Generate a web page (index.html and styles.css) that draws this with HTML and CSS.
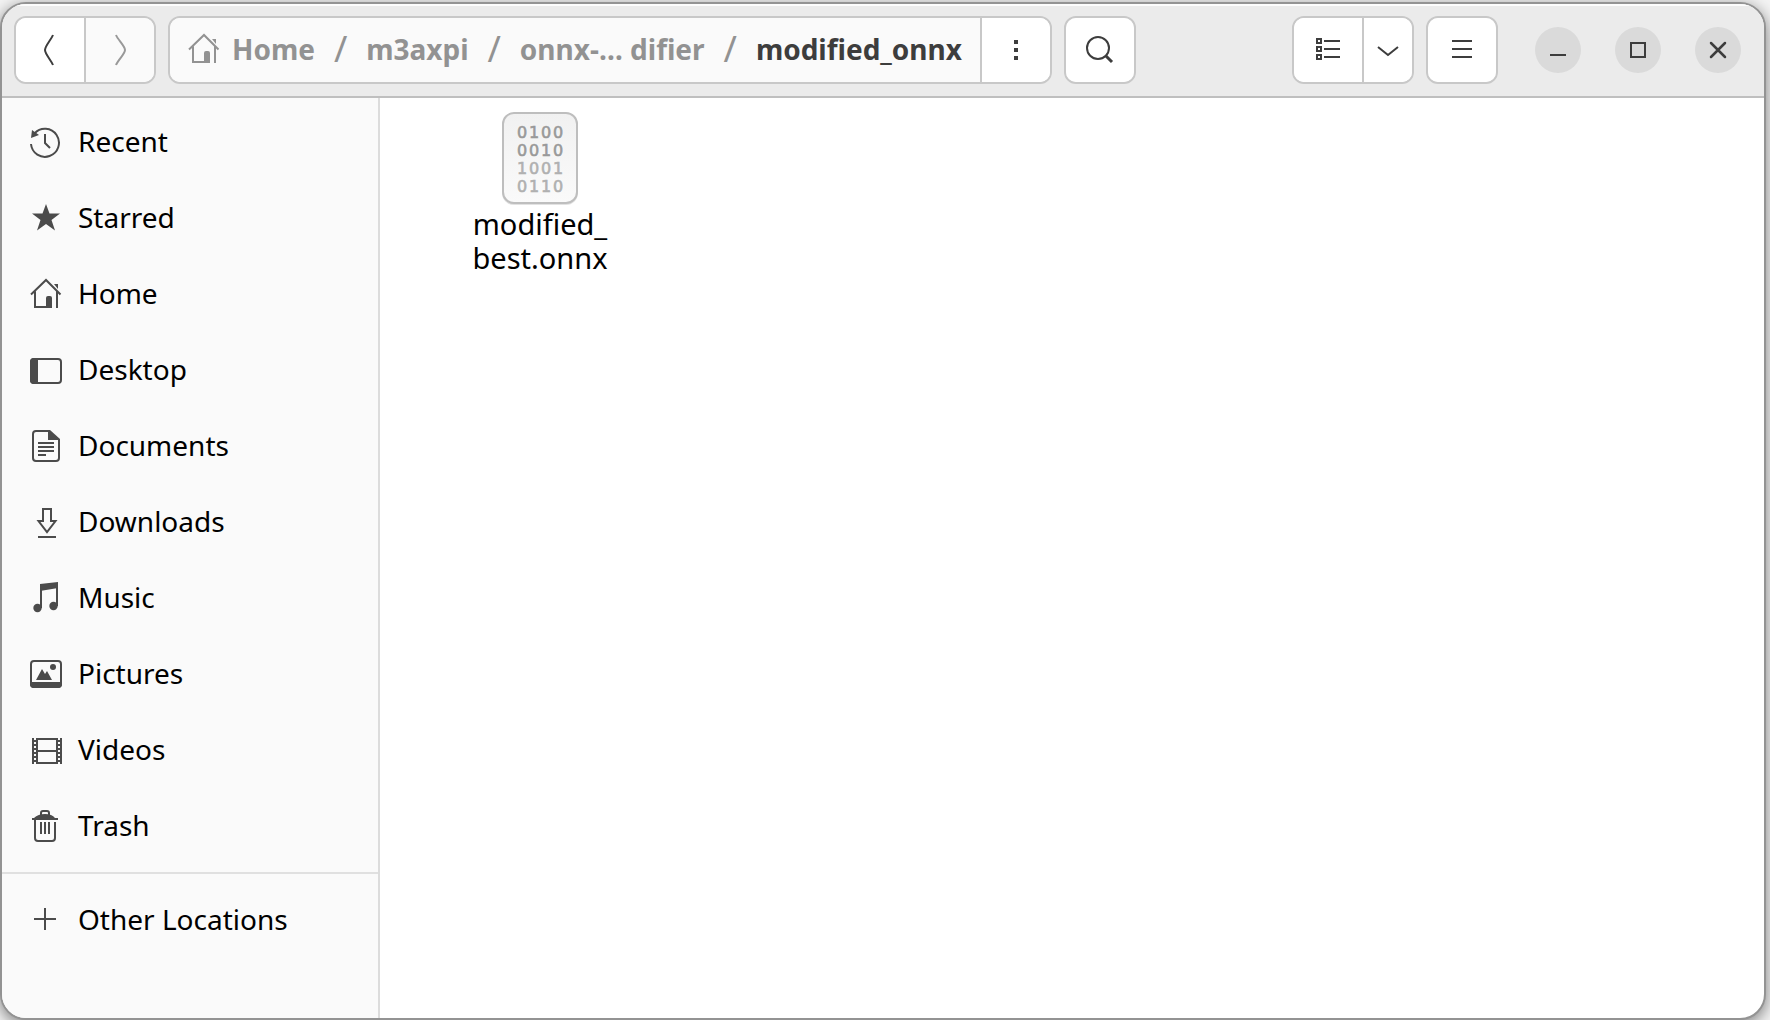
FILE: index.html
```html
<!DOCTYPE html>
<html lang="en">
<head>
<meta charset="utf-8">
<meta name="viewport" content="width=device-width, initial-scale=1">
<title>modified_onnx</title>
<link rel="stylesheet" href="styles.css">
</head>
<body>
<svg class="defs" aria-hidden="true">
  <symbol id="home" viewBox="0 0 32 32">
    <path d="M1 16.500 16 2 30.500 16.500M5 13.500V29H22M27 13.500V30" fill="none" stroke="currentColor" stroke-width="2"/>
    <path d="M16 30V20q0-2 2-2h2q2 0 2 2v10zM24 6h4v5z" fill="currentColor"/>
  </symbol>
</svg>
<div class="window">
  <header class="headerbar">
    <div class="group">
      <button class="btn" aria-label="Back"><svg class="icon" viewBox="0 0 32 32"><path d="M19 1C17 6 11 12 11 16S17 26 19 31" fill="none" stroke="currentColor" stroke-width="2"/></svg></button>
      <button class="btn btn-muted" aria-label="Forward" disabled><svg class="icon" viewBox="0 0 32 32"><path d="M12 1C14 6 21 12 21 16S14 26 12 31" fill="none" stroke="currentColor" stroke-width="2"/></svg></button>
    </div>
    <div class="group pathbar">
      <nav class="crumbs" aria-label="Path">
        <a class="crumb" href="#"><svg class="icon"><use href="#home"/></svg>Home</a>
        <span class="slash">/</span>
        <a class="crumb" href="#">m3axpi</a>
        <span class="slash">/</span>
        <a class="crumb" href="#">onnx-… difier</a>
        <span class="slash">/</span>
        <a class="crumb current" href="#" aria-current="page">modified_onnx</a>
      </nav>
      <button class="btn" aria-label="Folder menu"><svg class="icon" viewBox="0 0 32 32"><path d="M14 6h4v4h-4zM14 14h4v4h-4zM14 22h4v4h-4z" fill="currentColor"/></svg></button>
    </div>
    <div class="group"><button class="btn" aria-label="Search"><svg class="icon" viewBox="0 0 32 32"><g fill="none" stroke="currentColor"><circle cx="14" cy="14" r="11" stroke-width="2"/><path d="m22 22 6 6" stroke-width="3"/></g></svg></button></div>
    <div class="spacer"></div>
    <div class="group">
      <button class="btn" aria-label="List view"><svg class="icon" viewBox="0 0 32 32"><path d="M5 5h4v4H5zM5 13h4v4H5zM5 21h4v4H5zM12 7h16M12 15h16M12 23h16" fill="none" stroke="currentColor" stroke-width="2"/></svg></button>
      <button class="btn btn-narrow" aria-label="View options"><svg class="icon" viewBox="0 0 32 32"><path d="m6 13 10 8 10-8" fill="none" stroke="currentColor" stroke-width="2"/></svg></button>
    </div>
    <div class="group"><button class="btn" aria-label="Menu"><svg class="icon" viewBox="0 0 32 32"><path d="M6 7h20M6 15h20M6 23h20" fill="none" stroke="currentColor" stroke-width="2"/></svg></button></div>
    <div class="controls">
      <button class="round" aria-label="Minimize"><svg class="icon" viewBox="0 0 32 32"><path d="M8 21h16" stroke="currentColor" stroke-width="2"/></svg></button>
      <button class="round" aria-label="Maximize"><svg class="icon" viewBox="0 0 32 32"><path d="M9 9h14v14H9z" fill="none" stroke="currentColor" stroke-width="2"/></svg></button>
      <button class="round" aria-label="Close"><svg class="icon" viewBox="0 0 32 32"><path d="m9 9 14 14M23 9 9 23" stroke="currentColor" stroke-width="2.500" stroke-linecap="round"/></svg></button>
    </div>
  </header>
  <div class="body">
    <nav class="sidebar" aria-label="Places">
      <ul class="places">
        <li><a class="place" href="#"><svg class="icon" viewBox="0 0 32 32"><path d="M1 18A14 14 0 1 0 4.500 7.500M15 8v9l5 5" fill="none" stroke="currentColor" stroke-width="2"/><path d="M2 4l-1 8 8-3z" fill="currentColor"/></svg><span>Recent</span></a></li>
        <li><a class="place" href="#"><svg class="icon" viewBox="0 0 32 32"><path d="m16 2 3.500 9.500H30l-8.500 6.500 3.500 10.500L16 22l-9 6.500L10.500 18 2 11.500h10.500z" fill="currentColor"/></svg><span>Starred</span></a></li>
        <li><a class="place" href="#"><svg class="icon"><use href="#home"/></svg><span>Home</span></a></li>
        <li><a class="place" href="#"><svg class="icon" viewBox="0 0 32 32"><rect x="1" y="5" width="30" height="24" rx="3" fill="none" stroke="currentColor" stroke-width="2"/><path d="M8 4H4Q0 4 0 8v18q0 4 4 4h4z" fill="currentColor"/></svg><span>Desktop</span></a></li>
        <li><a class="place" href="#"><svg class="icon" viewBox="0 0 32 32"><path d="M20 1H6Q3 1 3 4v24q0 3 3 3h20q3 0 3-3V10M8 13h16M8 17h16M8 21h16M8 25h8" fill="none" stroke="currentColor" stroke-width="2"/><path d="M18 0h2l10 9v1H18z" fill="currentColor"/></svg><span>Documents</span></a></li>
        <li><a class="place" href="#"><svg class="icon" viewBox="0 0 32 32"><path d="M13 3h8v12h4.500L17 26 8.500 15H13zM8 31h18" fill="none" stroke="currentColor" stroke-width="2"/></svg><span>Downloads</span></a></li>
        <li><a class="place" href="#"><svg class="icon" viewBox="0 0 32 32"><path d="M11 26V5M27 24V3" fill="none" stroke="currentColor" stroke-width="2"/><path d="M10 2 28 0v6l-18 3z" fill="currentColor"/><circle cx="7.500" cy="26" r="4.200" fill="currentColor"/><circle cx="23.500" cy="24" r="4.200" fill="currentColor"/></svg><span>Music</span></a></li>
        <li><a class="place" href="#"><svg class="icon" viewBox="0 0 32 32"><rect x="1" y="3" width="30" height="26" rx="3" fill="none" stroke="currentColor" stroke-width="2"/><path d="M0 24h32v2q0 4-4 4H4q-4 0-4-4zM6 22l6-11 3 5 2-3 5 9z" fill="currentColor"/><circle cx="23" cy="9" r="3" fill="currentColor"/></svg><span>Pictures</span></a></li>
        <li><a class="place" href="#"><svg class="icon" viewBox="0 0 32 32"><path d="M3 4v26M7 4v26M27 4v26M31 4v26M7 5h20M7 17h20M7 29h20M3 7h4M3 11h4M3 15h4M3 19h4M3 23h4M3 27h4M27 7h4M27 11h4M27 15h4M27 19h4M27 23h4M27 27h4" fill="none" stroke="currentColor" stroke-width="2"/></svg><span>Videos</span></a></li>
        <li><a class="place" href="#"><svg class="icon" viewBox="0 0 32 32"><path d="M3 10v18q0 3 3 3h14q3 0 3-3V12M9 12v12M13 12v12M17 12v12M9 5V3q0-2 2-2h4q2 0 2 2v2" fill="none" stroke="currentColor" stroke-width="2" transform="translate(2)"/><path d="M2 8h2q4-4 11-4t10 4h3v2H2z" fill="currentColor"/></svg><span>Trash</span></a></li>
      </ul>
      <ul class="places places-other">
        <li><a class="place" href="#"><svg class="icon" viewBox="0 0 32 32"><path d="M15 4v22M4 15h22" stroke="currentColor" stroke-width="2"/></svg><span>Other Locations</span></a></li>
      </ul>
    </nav>
    <main class="files">
      <a class="file" href="#">
        <svg class="file-icon" viewBox="0 0 80 96">
          <defs><linearGradient id="paper" x1="0" y1="0" x2="0" y2="1"><stop offset="0" stop-color="#f1f1f1"/><stop offset="1" stop-color="#fafafa"/></linearGradient></defs>
          <rect x="2" y="4" width="76" height="90" rx="12" fill="#e2e2e2"/>
          <rect x="3" y="2" width="74" height="90" rx="11" fill="url(#paper)" stroke="#bebebe" stroke-width="2"/>
          <g class="bits">
            <text x="17 29 41 53" y="27" fill="#999" stroke="#999">0100</text>
            <text x="17 29 41 53" y="45" fill="#999" stroke="#999">0010</text>
            <text x="17 29 41 53" y="63" fill="#b0b0b0" stroke="#b0b0b0">1001</text>
            <text x="17 29 41 53" y="81" fill="#b0b0b0" stroke="#b0b0b0">0110</text>
          </g>
        </svg>
        <span class="file-name">modified_<wbr>best.onnx</span>
      </a>
    </main>
  </div>
</div>
</body>
</html>
```
FILE: styles.css
```css
* { box-sizing: border-box; }

body {
  margin: 0;
  min-height: 100vh;
  display: flex;
  padding: 2px 4px 0 0;
  background: #f4f4f4;
  color: #000;
  font: 28px/34px "Noto Sans", sans-serif;
}

a { color: inherit; text-decoration: none; }
ul { margin: 0; padding: 0; list-style: none; }
.defs { position: absolute; width: 0; height: 0; }
.icon { display: block; width: 32px; height: 32px; flex: none; }

.window {
  flex: 1;
  min-width: 0;
  display: flex;
  flex-direction: column;
  overflow: hidden;
  border: 2px solid #939393;
  border-radius: 26px;
  background: #fff;
  box-shadow: 0 4px 16px rgba(0, 0, 0, 0.5);
}

.headerbar {
  display: flex;
  align-items: center;
  gap: 12px;
  padding: 12px 23px 12px 12px;
  background: #ebebeb;
  border-bottom: 2px solid #bfbfbf;
  box-shadow: inset 0 2px #fcfcfc;
}

.group {
  display: flex;
  height: 68px;
  flex: none;
  overflow: hidden;
  border: 2px solid #c8c8c8;
  border-radius: 12px;
  background: #fff;
}

.btn {
  display: flex;
  align-items: center;
  justify-content: center;
  width: 68px;
  padding: 0;
  border: 0;
  background: #fff;
  color: #3d3d3d;
}
.btn + .btn, .crumbs + .btn { width: 70px; border-left: 2px solid #c8c8c8; }
.btn + .btn-narrow { width: 50px; }
.btn-muted { background: #fafafa; color: #999; }

.pathbar { flex: 0 1 884px; }
.crumbs {
  flex: 1;
  min-width: 0;
  display: flex;
  align-items: center;
  justify-content: space-between;
  padding: 0 18px 2px;
  background: #fafafa;
  color: #929292;
  white-space: nowrap;
}
.crumb { display: flex; align-items: center; gap: 12px; font-weight: 700; }
.current { color: #3d3d3d; }
.slash { font-size: 36px; }

.spacer { flex: 1; }

.controls { display: flex; gap: 34px; margin-left: 25px; }
.round {
  display: flex;
  align-items: center;
  justify-content: center;
  width: 46px;
  height: 46px;
  padding: 0;
  border: 0;
  border-radius: 50%;
  background: #dadada;
  color: #3d3d3d;
}

.body { flex: 1; display: flex; }

.sidebar {
  flex: none;
  width: 378px;
  border-right: 2px solid #dcdcdc;
  background: #fafafa;
}
.places { padding: 6px 0 8px; }
.places-other { border-top: 2px solid #e0e0e0; padding: 8px 0; }
.place {
  display: flex;
  align-items: center;
  gap: 16px;
  height: 76px;
  padding: 0 28px;
}
.place .icon { color: #4b4b4b; }
.place span { padding-bottom: 2px; }

.files { flex: 1; min-width: 0; padding: 13px 67px; }
.file {
  display: flex;
  flex-direction: column;
  align-items: center;
  width: 186px;
  text-align: center;
}
.file-icon { width: 80px; height: 96px; }
.file-name { width: 160px; font-size: 29px; }
.bits {
  font: 16px "DejaVu Sans", sans-serif;
  stroke-width: 0.6px;
}
```
